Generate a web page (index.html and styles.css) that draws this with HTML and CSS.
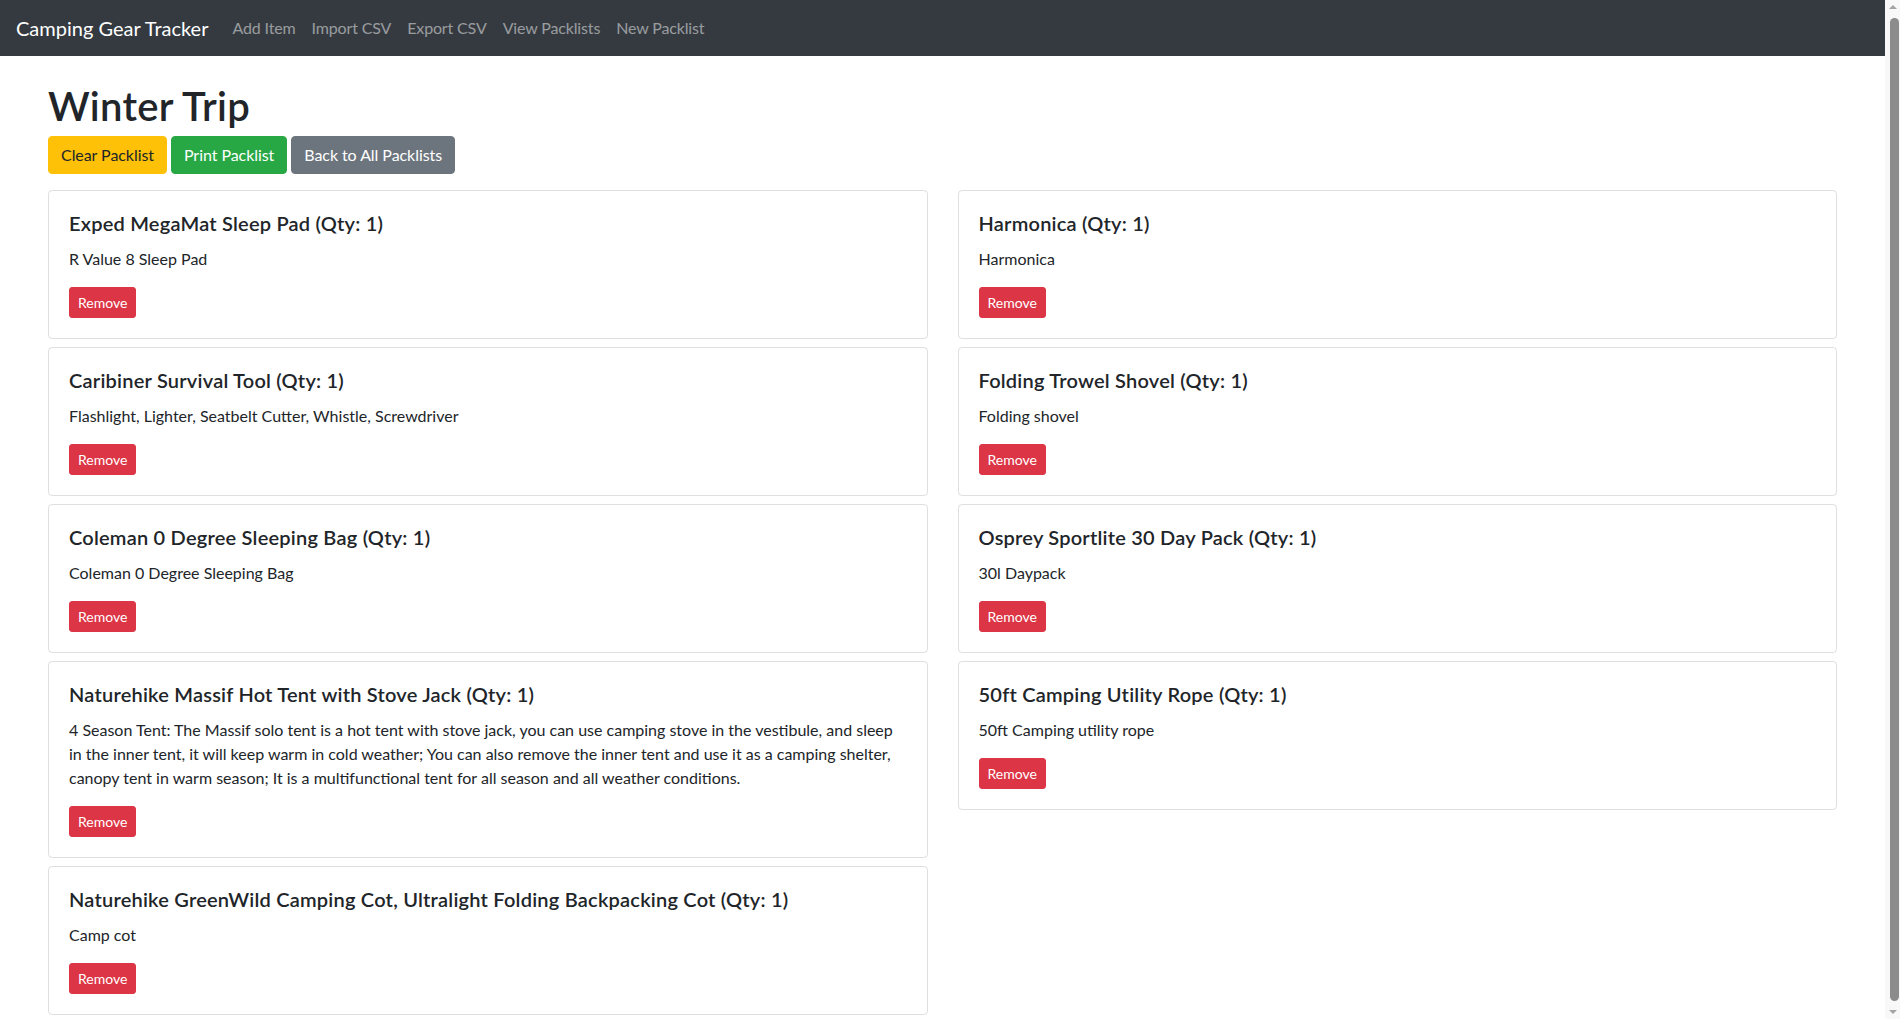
FILE: index.html
```html
<!DOCTYPE html>
<html lang="en">
<head>
<meta charset="utf-8">
<title>Winter Trip - Camping Gear Tracker</title>
<link rel="stylesheet" href="styles.css">
</head>
<body>
<div class="page">
<nav class="navbar">
  <a class="brand" href="#">Camping Gear Tracker</a>
  <ul class="nav">
    <li><a class="nav-link" href="#">Add Item</a></li>
    <li><a class="nav-link" href="#">Import CSV</a></li>
    <li><a class="nav-link" href="#">Export CSV</a></li>
    <li><a class="nav-link" href="#">View Packlists</a></li>
    <li><a class="nav-link" href="#">New Packlist</a></li>
  </ul>
</nav>
<main class="container">
  <h1 class="page-title">Winter Trip</h1>
  <div class="actions">
    <button class="btn btn-warning">Clear Packlist</button>
    <button class="btn btn-success">Print Packlist</button>
    <button class="btn btn-secondary">Back to All Packlists</button>
  </div>
  <div class="columns">
    <div class="column">
      <div class="card">
        <h5 class="card-title">Exped MegaMat Sleep Pad (Qty: 1)</h5>
        <p class="card-text">R Value 8 Sleep Pad</p>
        <button class="btn btn-sm btn-danger">Remove</button>
      </div>
      <div class="card">
        <h5 class="card-title">Caribiner Survival Tool (Qty: 1)</h5>
        <p class="card-text">Flashlight, Lighter, Seatbelt Cutter, Whistle, Screwdriver</p>
        <button class="btn btn-sm btn-danger">Remove</button>
      </div>
      <div class="card">
        <h5 class="card-title">Coleman 0 Degree Sleeping Bag (Qty: 1)</h5>
        <p class="card-text">Coleman 0 Degree Sleeping Bag</p>
        <button class="btn btn-sm btn-danger">Remove</button>
      </div>
      <div class="card">
        <h5 class="card-title">Naturehike Massif Hot Tent with Stove Jack (Qty: 1)</h5>
        <p class="card-text">4 Season Tent: The Massif solo tent is a hot tent with stove jack, you can use camping stove in the vestibule, and sleep in the inner tent, it will keep warm in cold weather; You can also remove the inner tent and use it as a camping shelter, canopy tent in warm season; It is a multifunctional tent for all season and all weather conditions.</p>
        <button class="btn btn-sm btn-danger">Remove</button>
      </div>
      <div class="card">
        <h5 class="card-title">Naturehike GreenWild Camping Cot, Ultralight Folding Backpacking Cot (Qty: 1)</h5>
        <p class="card-text">Camp cot</p>
        <button class="btn btn-sm btn-danger">Remove</button>
      </div>
    </div>
    <div class="column">
      <div class="card">
        <h5 class="card-title">Harmonica (Qty: 1)</h5>
        <p class="card-text">Harmonica</p>
        <button class="btn btn-sm btn-danger">Remove</button>
      </div>
      <div class="card">
        <h5 class="card-title">Folding Trowel Shovel (Qty: 1)</h5>
        <p class="card-text">Folding shovel</p>
        <button class="btn btn-sm btn-danger">Remove</button>
      </div>
      <div class="card">
        <h5 class="card-title">Osprey Sportlite 30 Day Pack (Qty: 1)</h5>
        <p class="card-text">30l Daypack</p>
        <button class="btn btn-sm btn-danger">Remove</button>
      </div>
      <div class="card">
        <h5 class="card-title">50ft Camping Utility Rope (Qty: 1)</h5>
        <p class="card-text">50ft Camping utility rope</p>
        <button class="btn btn-sm btn-danger">Remove</button>
      </div>
    </div>
  </div>
</main>
</div>
<div class="scrollbar" aria-hidden="true">
  <span class="sb-arrow sb-up"></span>
  <span class="sb-thumb"></span>
  <span class="sb-arrow sb-down"></span>
</div>
</body>
</html>
```

FILE: styles.css
```css
* { box-sizing: border-box; }

html, body {
  margin: 0;
  padding: 0;
}

body {
  font-family: "Lato", "Liberation Sans", sans-serif;
  font-size: 16px;
  line-height: 1.5;
  color: #212529;
  background: #fff;
}

.page {
  margin-right: 15px;
}

.navbar {
  display: flex;
  align-items: center;
  background: #343a40;
  padding: 8px 16px;
  height: 56px;
}

.brand {
  color: #fff;
  font-size: 20px;
  line-height: 30px;
  text-decoration: none;
  margin-right: 16px;
  padding: 5px 0;
}

.nav {
  display: flex;
  list-style: none;
  margin: 0;
  padding: 0;
}

.nav-link {
  display: block;
  padding: 8px;
  color: rgba(255, 255, 255, 0.5);
  text-decoration: none;
  letter-spacing: -0.15px;
}

.container {
  padding: 26px 48px 16px;
}

.page-title {
  font-size: 40px;
  font-weight: 600;
  line-height: 1.2;
  letter-spacing: 0.3px;
  margin: 0 0 6px;
}

.actions {
  display: flex;
  gap: 4px;
  margin-bottom: 16px;
}

.btn {
  font-family: inherit;
  font-size: 16px;
  line-height: 1.5;
  padding: 6px 12px;
  border: 1px solid transparent;
  border-radius: 4px;
  cursor: pointer;
}

.actions .btn {
  letter-spacing: -0.06px;
}

.btn-warning { background: #ffc107; border-color: #ffc107; color: #212529; }
.btn-success { background: #28a745; border-color: #28a745; color: #fff; }
.btn-secondary { background: #6c757d; border-color: #6c757d; color: #fff; }
.btn-danger { background: #dc3545; border-color: #dc3545; color: #fff; }

.btn-sm {
  font-size: 14px;
  padding: 4px 8px;
  border-radius: 3px;
}

.columns {
  display: grid;
  grid-template-columns: 1fr 1fr;
  column-gap: 30px;
  align-items: start;
}

.column {
  display: flex;
  flex-direction: column;
  gap: 8px;
}

.card {
  border: 1px solid rgba(0, 0, 0, 0.125);
  border-radius: 4px;
  padding: 20px;
}

.card-title {
  font-size: 20px;
  font-weight: 600;
  line-height: 1.2;
  letter-spacing: 0.22px;
  margin: 0 0 12px;
}

.card-text {
  margin: 0 0 16px;
}

.scrollbar {
  position: fixed;
  top: 0;
  right: 0;
  bottom: 0;
  width: 15px;
  background: #f8f8f8;
  display: flex;
  flex-direction: column;
  align-items: center;
}

.sb-arrow {
  width: 0;
  height: 0;
  border-left: 4px solid transparent;
  border-right: 4px solid transparent;
  flex: none;
}

.sb-up {
  border-bottom: 4px solid #a3a3a3;
  margin: 5px 0 9px;
}

.sb-down {
  border-top: 4px solid #a3a3a3;
  margin: 9px 0 5px;
}

.sb-thumb {
  flex: 1;
  width: 9px;
  margin-left: 3px;
  background: #8c8c8c;
  border-radius: 5px;
}
```
